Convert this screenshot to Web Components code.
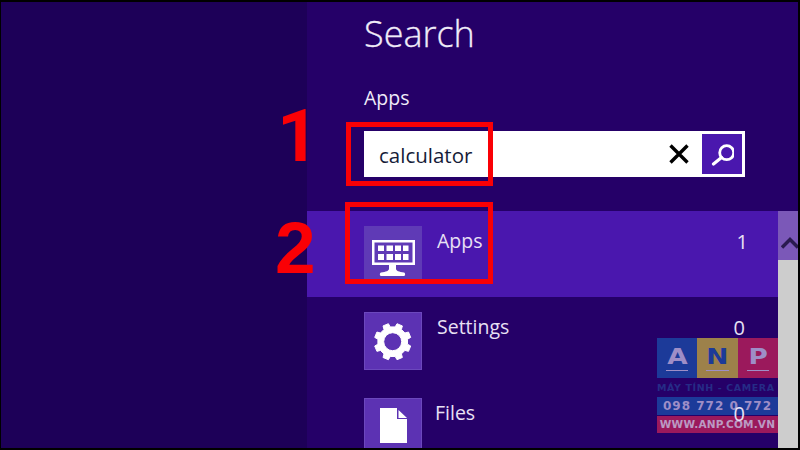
<!DOCTYPE html>
<html>
<head>
<meta charset="utf-8">
<style>
html, body { margin: 0; padding: 0; background: #000; }
body { width: 800px; height: 450px; overflow: hidden; font-family: "Open Sans", "Noto Sans", sans-serif; }
</style>
</head>
<body>
<search-screen>
  <search-box slot="box" value="calculator"></search-box>
  <result-row slot="rows" label="Apps" count="1" icon="apps" active></result-row>
  <result-row slot="rows" label="Settings" count="0" icon="settings"></result-row>
  <result-row slot="rows" label="Files" count="0" icon="files"></result-row>
</search-screen>
<script>
// eight teeth, turned so that none points straight up
function gearPath(cx, cy, outer, root, hole) {
    let d = '';
    for (let i = 0; i < 8; i++) {
        const mid = (i * 45 + 22.5) * Math.PI / 180;
        const pts = [[root, -13], [outer, -9], [outer, 9], [root, 13]];
        pts.forEach(([r, deg], j) => {
            const a = mid + deg * Math.PI / 180;
            const x = (cx + r * Math.cos(a)).toFixed(2);
            const y = (cy + r * Math.sin(a)).toFixed(2);
            d += (i === 0 && j === 0 ? 'M' : 'L') + x + ' ' + y;
        });
    }
    d += `zM${cx - hole} ${cy}a${hole} ${hole} 0 1 0 ${hole * 2} 0a${hole} ${hole} 0 1 0 ${-hole * 2} 0z`;
    return d;
}

const ICONS = {
    apps: `<svg width="58" height="58" viewBox="0 0 58 58" fill="#fff">
        <path fill-rule="evenodd" d="M8 14h43v25H8zM10.500 16.500v20h38v-20z"/>
        <rect x="14" y="19.500" width="6" height="5.500"/><rect x="22.500" y="19.500" width="6.500" height="5.500"/><rect x="31" y="19.500" width="6" height="5.500"/><rect x="39" y="19.500" width="5.500" height="5.500"/>
        <rect x="14" y="28" width="6" height="6"/><rect x="22.500" y="28" width="6.500" height="6"/><rect x="31" y="28" width="6" height="6"/><rect x="39" y="28" width="5.500" height="6"/>
        <path d="M25 39h7v4c0 1.500 3 3 8 3.500 1.500.2 1.500 3.500 0 3.500H17c-1.500 0-1.500-3.300 0-3.500 5-.5 8-2 8-3.500z"/>
    </svg>`,
    settings: `<svg width="58" height="58" viewBox="0 0 58 58">
        <path fill="#fff" stroke="#fff" stroke-width="1" stroke-linejoin="round" fill-rule="evenodd" d="${gearPath(28.7, 29.7, 18.5, 15, 9)}"/>
    </svg>`,
    files: `<svg width="58" height="58" viewBox="0 0 58 58" fill="#fff">
        <path d="M16 10h17v11h10v24H16z"/>
        <path d="M34.500 12l8.500 8h-8.500z"/>
    </svg>`
};

class SearchBox extends HTMLElement {
    connectedCallback() {
        this.attachShadow({ mode: 'open' });
        const value = this.getAttribute('value') || '';
        this.shadowRoot.innerHTML = `
            <style>
                :host { display: flex; box-sizing: border-box; width: 381px; height: 46px; background: #fff; border: 2px solid #fff; align-items: stretch; }
                .value { flex: 1; color: #161c38; font-size: 20.500px; line-height: 44px; padding-left: 13px; }
                .clear { width: 45px; display: flex; align-items: center; justify-content: flex-start; }
                .go { width: 40px; margin: 1px 1px 1px 0; background: #4a17ae; display: flex; align-items: center; justify-content: center; }
                .clear svg { margin-left: 11px; }
            </style>
            <div class="value">${value}</div>
            <div class="clear">
                <svg width="22" height="22" viewBox="0 0 22 22"><path d="M2.500 2.500l17 17M19.500 2.500l-17 17" stroke="#000" stroke-width="3.400" fill="none"/></svg>
            </div>
            <div class="go">
                <svg width="24" height="24" viewBox="0 0 24 24" fill="none" stroke="#fff"><circle cx="16.700" cy="10.700" r="7" stroke-width="2.800"/><path d="M11.500 15.500L3.500 22" stroke-width="3.200" stroke-linecap="round"/></svg>
            </div>
        `;
    }
}
customElements.define('search-box', SearchBox);

class ResultRow extends HTMLElement {
    connectedCallback() {
        this.attachShadow({ mode: 'open' });
        const label = this.getAttribute('label');
        const count = this.getAttribute('count');
        const icon = this.getAttribute('icon');
        this.shadowRoot.innerHTML = `
            <style>
                :host { display: flex; height: 86px; box-sizing: border-box; padding: 15px 33px 0 57px; color: #e8e0f4; }
                :host([active]) { background: #4a17ae; }
                .tile { width: 58px; height: 58px; background: #5c32b3; border: 1px solid #6c48bd; box-sizing: border-box; flex: none; }
                :host([active]) .tile { background: #5f3ab6; border-color: #5f3ab6; }
                .tile svg { display: block; margin: -1px; }
                .label { flex: 1; font-size: 19.500px; line-height: 26px; padding: 2px 0 0 15px; }
                :host([icon="files"]) .label { padding-left: 13px; }
                .count { font-size: 20px; line-height: 26px; padding-top: 3px; }
                :host([active]) .count { margin-right: -3px; }
            </style>
            <div class="tile">${ICONS[icon]}</div>
            <div class="label">${label}</div>
            <div class="count">${count}</div>
        `;
    }
}
customElements.define('result-row', ResultRow);

class AnpMark extends HTMLElement {
    connectedCallback() {
        this.attachShadow({ mode: 'open' });
        this.shadowRoot.innerHTML = `
            <style>
                :host { position: absolute; z-index: 1; left: 657px; top: 338px; width: 121px; display: block; font-family: "DejaVu Sans", sans-serif; font-weight: bold; opacity: .92; }
                .letters { display: flex; height: 40px; }
                .letters div { flex: 1; text-align: center; font-size: 22px; line-height: 38px; color: #a99bd0; position: relative; }
                .letters span { display: inline-block; transform: scaleX(1.2); }
                .letters div::after { content: ""; position: absolute; left: 9px; right: 9px; bottom: 7px; height: 1px; background: #a99bd0; }
                .a { background: #1c3f9e; }
                .n { background: #a88c48; color: #1c3f9e !important; }
                .p { background: #a51c5c; }
                .tag { height: 19px; font-size: 9.500px; line-height: 19px; letter-spacing: .6px; color: #27308a; white-space: nowrap; overflow: hidden; }
                .phone { height: 18px; background: #1c3f9e; color: #a99bd0; font-size: 12px; line-height: 18px; text-align: center; white-space: nowrap; letter-spacing: 1px; }
                .web { margin-top: 1px; height: 17px; background: #a51c5c; color: #c8a8cc; font-size: 10.500px; line-height: 17px; text-align: center; white-space: nowrap; letter-spacing: .2px; }
            </style>
            <div class="letters"><div class="a"><span>A</span></div><div class="n"><span>N</span></div><div class="p"><span>P</span></div></div>
            <div class="tag">MÁY TÍNH - CAMERA</div>
            <div class="phone">098 772 0 772</div>
            <div class="web">WWW.ANP.COM.VN</div>
        `;
    }
}
customElements.define('anp-mark', AnpMark);

class SearchScreen extends HTMLElement {
    connectedCallback() {
        this.attachShadow({ mode: 'open' });
        this.shadowRoot.innerHTML = `
            <style>
                :host { display: block; position: relative; width: 800px; height: 450px; overflow: hidden; background: #000; box-sizing: border-box; padding: 2px 2px 2px 1px; }
                .desk { display: flex; height: 100%; background: #1d0058; }
                .left { width: 306px; flex: none; }
                .panel { flex: 1; background: #250068; display: flex; flex-direction: column; overflow: hidden; }
                .head { height: 209px; flex: none; box-sizing: border-box; padding: 0 0 0 57px; color: #f0ecf8; }
                h1 { margin: 0; font-weight: 300; font-size: 36px; line-height: 50px; height: 80px; padding-top: 7px; box-sizing: border-box; -webkit-text-stroke: .3px #f0ecf8; }
                h2 { margin: 0; font-weight: 400; font-size: 19.500px; line-height: 26px; height: 49px; padding-top: 3px; box-sizing: border-box; }
                .body { display: flex; flex: 1; min-height: 0; }
                .rows { flex: 1; overflow: hidden; position: relative; z-index: 2; }
                .bar { width: 20px; background: #cdcdcd; flex: none; }
                .up { height: 49px; box-sizing: border-box; padding-top: 25px; background: #7b58b8; overflow: hidden; }
                .up svg { display: block; margin-left: 3px; }
                .mark { position: absolute; z-index: 3; box-sizing: border-box; border: 5px solid #fa0005; }
                .n1 { left: 346px; top: 122px; width: 147px; height: 64px; }
                .n2 { left: 345px; top: 202px; width: 148px; height: 82px; }
                .num { position: absolute; z-index: 3; color: #fa0005; font: bold 73px/73px "Liberation Sans", sans-serif; }
                .one { font-family: Roboto, sans-serif; font-weight: 700; left: 277px; top: 100px; }
                .two { left: 275px; top: 211px; }
            </style>
            <div class="desk">
                <div class="left"></div>
                <div class="panel">
                    <div class="head">
                        <h1>Search</h1>
                        <h2>Apps</h2>
                        <slot name="box"></slot>
                    </div>
                    <div class="body">
                        <div class="rows"><slot name="rows"></slot></div>
                        <div class="bar">
                            <div class="up"><svg width="20" height="13" viewBox="0 0 20 13"><path d="M1 11.500l8-8 8 8" fill="none" stroke="#2a1a50" stroke-width="3.400"/></svg></div>
                        </div>
                    </div>
                </div>
            </div>
            <anp-mark></anp-mark>
            <div class="mark n1"></div>
            <div class="mark n2"></div>
            <div class="num one">1</div>
            <div class="num two">2</div>
        `;
    }
}
customElements.define('search-screen', SearchScreen);
</script>
</body>
</html>
